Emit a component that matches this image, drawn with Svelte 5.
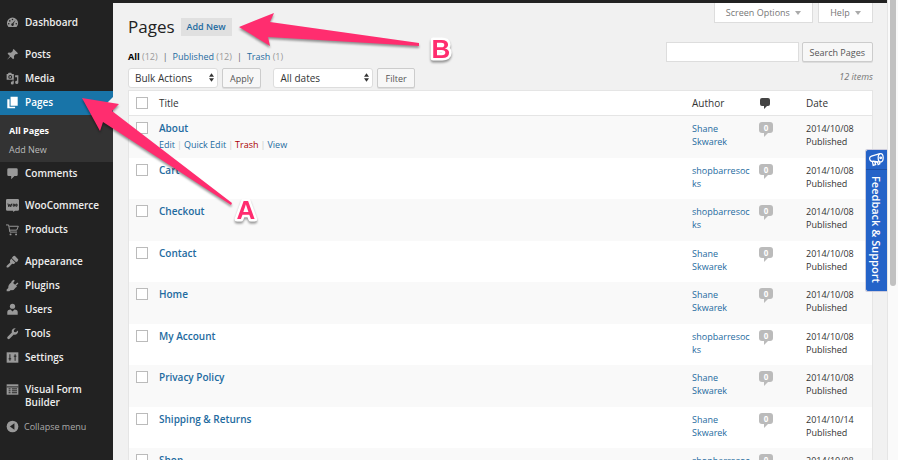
<script>
    let checked = false;
    let filterDate = 'All dates';
    let bulk = 'Bulk Actions';
    let query = '';

    const menu = [
        { name: 'Dashboard', icon: 'dashboard', gap: true },
        { name: 'Posts', icon: 'pin' },
        { name: 'Media', icon: 'media' },
        { name: 'Pages', icon: 'pages', active: true, sub: ['All Pages', 'Add New'] },
        { name: 'Comments', icon: 'comment', gap: true },
        { name: 'WooCommerce', icon: 'woo' },
        { name: 'Products', icon: 'cart', gap: true },
        { name: 'Appearance', icon: 'brush' },
        { name: 'Plugins', icon: 'plug' },
        { name: 'Users', icon: 'user' },
        { name: 'Tools', icon: 'wrench' },
        { name: 'Settings', icon: 'settings', gap: true },
        { name: 'Visual Form Builder', icon: 'form' },
    ];

    const pages = [
        { title: 'About', author: 'Shane Skwarek', date: '2014/10/08', open: true },
        { title: 'Cart', author: 'shopbarresocks', date: '2014/10/08' },
        { title: 'Checkout', author: 'shopbarresocks', date: '2014/10/08' },
        { title: 'Contact', author: 'Shane Skwarek', date: '2014/10/08' },
        { title: 'Home', author: 'Shane Skwarek', date: '2014/10/08' },
        { title: 'My Account', author: 'shopbarresocks', date: '2014/10/08' },
        { title: 'Privacy Policy', author: 'Shane Skwarek', date: '2014/10/08' },
        { title: 'Shipping & Returns', author: 'Shane Skwarek', date: '2014/10/14' },
        { title: 'Shop', author: 'shopbarresocks', date: '2014/10/08' },
    ];
</script>

<div class="shell">
    <div class="adminbar"></div>

    <nav class="menu">
        {#each menu as item}
            <a class="item" class:active={item.active} class:gap={item.gap} href="#{item.icon}">
                <svg class="icon" viewBox="0 0 20 20" aria-hidden="true">
                    {#if item.icon === 'dashboard'}
                        <path d="M3.8 17a8.6 8.6 0 1 1 12.4 0z" />
                        <g class="cut"><circle cx="10" cy="5.5" r="1.2" /><circle cx="5.8" cy="7.5" r="1.2" /><circle cx="4.2" cy="11.8" r="1.2" /><circle cx="15.8" cy="11.8" r="1.2" /><path d="M14.8 5.8 11.6 12a2 2 0 1 1-1.6-.8z" /></g>
                    {:else if item.icon === 'pin'}
                        <path d="m10.4 3 1.4-1.4 6.6 6.6L17 9.6l-2-.2-2.8 2.8.3 3.4-1.6 1.6-3.7-3.7L1.6 18l4.500-5.600-3.700-3.700L4 7.100l3.600.300L10.600 4.500z" />
                    {:else if item.icon === 'media'}
                        <path fill-rule="evenodd" d="M1 3h2l1-2h4l1 2h3v9H1zm5.500 1.500a3 3 0 1 0 0 6 3 3 0 0 0 0-6zm0 1.500a1.500 1.500 0 1 1 0 3 1.500 1.500 0 0 1 0-3z" />
                        <path d="M14 5h5v11a2.500 2.500 0 1 1-2-2.400V8h-3zm-4 8h2v4a2.300 2.300 0 1 1-2-2.200z" />
                    {:else if item.icon === 'pages'}
                        <path d="M7 1h11v14H7zM2 5h3.500v11.500H14V19H2z" />
                    {:else if item.icon === 'comment'}
                        <path d="M4 2h12q2 0 2 2v8q0 2-2 2h-3l-5 5v-5H4q-2 0-2-2V4q0-2 2-2z" />
                    {:else if item.icon === 'woo'}
                        <path d="M2 0h16q2 0 2 2v14q0 2-2 2h-4l-3 2v-2H2q-2 0-2-2V2q0-2 2-2z" />
                        <path class="line dark" d="m3 7 1.300 5L6 8l1.300 4L9 7m2 1v3h2V8zm4 0v3h2V8z" />
                    {:else if item.icon === 'cart'}
                        <path class="line" d="M0 3h4l2 11h11M5 5h14l-2.500 6H6" /><circle cx="7" cy="17.500" r="1.500" /><circle cx="15.500" cy="17.500" r="1.500" />
                    {:else if item.icon === 'brush'}
                        <path d="m11 2 2.500-1L19 7l-1 2.500-2.500 1.500L9 4.500zM8 5.500l6.500 6.500-2.500 2-2.500-.500-5 5Q2 20 1 19q-1-1 .500-3l5-4.500L6 9z" />
                    {:else if item.icon === 'plug'}
                        <path d="m12 1 1.500 1.500L11 6l3 3 3.500-3.500L19 7l-3.500 3.500L17 12l-2 1q-3 5-7.500 4L5 19H1v-3l2.500-2Q3 9 8 5.500L9 3z" />
                    {:else if item.icon === 'user'}
                        <circle cx="10" cy="5" r="4" /><path d="M2 18v-4q0-4 5-4l3 3 3-3q5 0 5 4v4z" />
                    {:else if item.icon === 'wrench'}
                        <path d="M18.500 5.500a5 5 0 0 1-6.500 6L5.500 18q-1.500 1.500-3 0t0-3L9 8.500a5 5 0 0 1 6-6.500l-3 3 .500 2.500 2.500.500z" />
                    {:else if item.icon === 'settings'}
                        <path d="M1 2h18v16H1z" /><path class="line dark" d="M6 5v10M4 12h4m6-7v10m-2-7h4" />
                    {:else if item.icon === 'form'}
                        <path d="M1 2h18v16H1z" /><path class="line dark" d="M1 6h18M4 9h3m2 0h8M4 12h3m2 0h8M4 15h3m2 0h8" />
                    {/if}
                </svg>
                <span>{item.name}</span>
            </a>
            {#if item.sub}
                <div class="submenu">
                    {#each item.sub as sub, i}
                        <a class:current={i === 0} href="#sub{i}">{sub}</a>
                    {/each}
                </div>
            {/if}
        {/each}
        <button class="collapse">
            <svg class="icon" viewBox="0 0 20 20" aria-hidden="true"><circle cx="10" cy="10" r="9" /><path class="cut" d="M13 5v10l-7-5z" /></svg>
            <span>Collapse menu</span>
        </button>
    </nav>

    <main>
        <header>
            <h1>Pages</h1>
            <a class="add" href="#new">Add New</a>
            <div class="tabs">
                <button>Screen Options <i></i></button>
                <button>Help <i></i></button>
            </div>
        </header>

        <div class="controls">
            <div class="left">
                <div class="views">
                    <a class="current" href="#all"><b>All</b> <span>(12)</span></a><em>|</em>
                    <a href="#published">Published <span>(12)</span></a><em>|</em>
                    <a href="#trash">Trash <span>(1)</span></a>
                </div>
                <div class="filters">
                    <div class="select bulk">
                        <select aria-label="Bulk actions" bind:value={bulk}>
                            <option>Bulk Actions</option>
                            <option>Edit</option>
                        </select>
                        <svg viewBox="0 0 6 10" aria-hidden="true"><path d="M3 0l3 4H0zM0 6h6l-3 4z" /></svg>
                    </div>
                    <button class="btn">Apply</button>
                    <div class="select dates">
                        <select aria-label="Filter by date" bind:value={filterDate}>
                            <option>All dates</option>
                            <option>October 2014</option>
                        </select>
                        <svg viewBox="0 0 6 10" aria-hidden="true"><path d="M3 0l3 4H0zM0 6h6l-3 4z" /></svg>
                    </div>
                    <button class="btn">Filter</button>
                </div>
            </div>
            <div class="right">
                <div class="search">
                    <input type="text" aria-label="Search Pages" bind:value={query} />
                    <button class="btn">Search Pages</button>
                </div>
                <p>12 items</p>
            </div>
        </div>

        <table>
            <thead>
                <tr>
                    <th class="check"><input type="checkbox" aria-label="Select all" bind:checked /></th>
                    <th>Title</th>
                    <th class="author">Author</th>
                    <th class="count"><svg viewBox="0 0 10 11" aria-label="Comments"><path d="M2 0h6q2 0 2 2v4q0 2-2 2H7l-3 3V8H2Q0 8 0 6V2q0-2 2-2z" /></svg></th>
                    <th class="date">Date</th>
                </tr>
            </thead>
            <tbody>
                {#each pages as page}
                    <tr>
                        <td class="check"><input type="checkbox" aria-label="Select {page.title}" {checked} /></td>
                        <td>
                            <a class="title" href="#edit">{page.title}</a>
                            {#if page.open}
                                <div class="actions">
                                    <a href="#edit">Edit</a><i>|</i><a href="#quick">Quick Edit</a><i>|</i><a class="trash" href="#trash">Trash</a><i>|</i><a href="#view">View</a>
                                </div>
                            {/if}
                        </td>
                        <td class="author"><a href="#author">{page.author}</a></td>
                        <td class="count"><a class="bubble" href="#comments">0</a></td>
                        <td class="date">{page.date}<br />Published</td>
                    </tr>
                {/each}
            </tbody>
        </table>
    </main>

    <div class="scrollbar"><div></div></div>

    <a class="feedback" href="#feedback">
        <svg viewBox="0 0 18 18" aria-hidden="true"><path d="M13 2 3 5Q0 6 1 9t4 2l9 1M4 11l1 5 3-1-1-3 3 0 1 3 2-1-1-2" /><ellipse cx="14" cy="7" rx="3" ry="5" /><circle cx="14" cy="7" r="1" /></svg>
        <span>Feedback &amp; Support</span>
    </a>

    <svg class="notes" width="460" height="240" viewBox="0 0 460 240">
        <path d="M82 98l37 6-7 7 120 92-1 2L103 122l-3 9z" />
        <path d="M239 27l35-14-4 9 149 21v3l-151-9 2 9z" />
        <text x="246" y="219">A</text>
        <text x="441" y="58">B</text>
    </svg>
</div>

<style>
    :global(body) {
        margin: 0;
        background: #f1f1f1;
    }
    .shell {
        --link: #1e6ba0;
        position: relative;
        display: grid;
        grid-template: 3px 1fr / 113px 1fr 11px;
        height: 100vh;
        overflow: hidden;
        background: #f1f1f1;
        color: #333;
        font: 10px/13px "Open Sans", sans-serif;
    }
    a {
        color: var(--link);
        text-decoration: none;
    }
    button, select, input {
        font: inherit;
        color: inherit;
        margin: 0;
        box-sizing: border-box;
    }
    button {
        font-size: 9px;
    }
    .adminbar {
        grid-column: 1 / 3;
        background: #222;
    }

    .menu {
        grid-area: 2 / 1;
        display: flex;
        flex-direction: column;
        padding-top: 8px;
        background: #222;
    }
    .item {
        box-sizing: border-box;
        display: flex;
        align-items: flex-start;
        gap: 6px;
        min-height: 24px;
        padding: 5px 16px 5px 6px;
        color: #eee;
        font-weight: 600;
    }
    .item.gap {
        margin-bottom: 8px;
    }
    .item.active {
        position: relative;
        background: #1874a8;
        color: #fff;
    }
    .item.active::after {
        content: "";
        position: absolute;
        right: 0;
        top: 6px;
        border: 6px solid transparent;
        border-right-color: #f1f1f1;
        border-left: 0;
    }
    .icon {
        width: 13px;
        height: 13px;
        flex: none;
        fill: #999;
    }
    .active .icon {
        fill: #fff;
    }
    .cut {
        fill: #222;
    }
    .line {
        fill: none;
        stroke: #999;
        stroke-width: 1.5;
    }
    .dark {
        stroke: #222;
    }
    .submenu {
        display: flex;
        flex-direction: column;
        padding: 6px 9px 3px;
        background: #333;
        font-size: 9px;
    }
    .submenu a {
        color: #bbb;
        line-height: 19px;
    }
    .submenu .current {
        color: #fff;
        font-weight: 700;
    }
    .collapse {
        display: flex;
        align-items: center;
        gap: 5px;
        height: 24px;
        padding: 0 6px;
        border: 0;
        background: none;
        color: #aaa;
    }

    main {
        grid-area: 2 / 2;
        min-width: 0;
        padding: 0 14px 0 15px;
    }
    header {
        display: flex;
        align-items: center;
        height: 47px;
        gap: 6px;
    }
    h1 {
        margin: 0;
        color: #222;
        font-size: 17px;
        font-weight: 400;
        line-height: 24px;
    }
    .add {
        padding: 2px 6px;
        background: #e0e0e0;
        font-size: 9px;
        font-weight: 600;
        line-height: 14px;
    }
    .tabs {
        display: flex;
        align-self: flex-start;
        gap: 5px;
        margin-left: auto;
    }
    .tabs button {
        height: 20px;
        padding: 0 11px;
        border: 1px solid #ddd;
        border-top: 0;
        background: #fff;
        color: #777;
    }
    .tabs i {
        display: inline-block;
        margin: 0 0 1px 3px;
        border: 3px solid transparent;
        border-top: 4px solid #aaa;
        border-bottom: 0;
    }
    .controls {
        display: flex;
        justify-content: space-between;
        height: 40px;
    }
    .views {
        display: flex;
        gap: 5px;
        font-size: 9px;
        line-height: 14px;
    }
    .views span {
        color: #999;
    }
    .views em {
        color: #666;
        font-style: normal;
    }
    .views .current {
        color: #000;
    }
    .filters {
        display: flex;
        gap: 4px;
        margin-top: 4px;
    }
    .select {
        position: relative;
    }
    .select svg {
        position: absolute;
        right: 4px;
        top: 5px;
        width: 5px;
        height: 9px;
        fill: #333;
        pointer-events: none;
    }
    select {
        appearance: none;
        width: 100%;
        height: 20px;
        padding: 0 6px;
        border: 1px solid #ddd;
        border-radius: 3px;
        background: #fff;
    }
    .bulk {
        width: 90px;
    }
    .dates {
        width: 100px;
        margin-left: 8px;
    }
    .btn {
        height: 20px;
        padding: 0 7px;
        border: 1px solid #ccc;
        border-radius: 2px;
        background: #f7f7f7;
        box-shadow: 0 1px 0 #ddd;
        color: #555;
    }
    .right {
        margin-top: -8px;
    }
    .search {
        display: flex;
        gap: 3px;
    }
    .search input {
        width: 133px;
        height: 20px;
        border: 1px solid #ddd;
        background: #fff;
    }
    .right p {
        margin: 8px 0 0;
        color: #777;
        font-size: 9px;
        font-style: italic;
        text-align: right;
    }

    table {
        width: 100%;
        border: 1px solid #e5e5e5;
        border-spacing: 0;
        table-layout: fixed;
        background: #fff;
    }
    th {
        height: 24px;
        padding: 0;
        border-bottom: 1px solid #e5e5e5;
        font-weight: 400;
        text-align: left;
    }
    td {
        box-sizing: border-box;
        height: 41px;
        padding: 6px 0 0;
        vertical-align: top;
        font-size: 9px;
    }
    tbody tr:nth-child(odd) td {
        height: 42px;
    }
    tbody tr:nth-child(odd) {
        background: #f9f9f9;
    }
    .check {
        width: 30px;
        text-align: center;
    }
    .check input {
        appearance: none;
        display: block;
        width: 12px;
        height: 12px;
        margin-left: 7px;
        border: 1px solid #bbb;
        background: #fff;
    }
    .author {
        width: 67px;
    }
    td.author {
        padding-right: 7px;
        overflow-wrap: anywhere;
    }
    .count {
        width: 47px;
    }
    .count svg {
        display: block;
        width: 10px;
        height: 11px;
        margin-left: 1px;
        fill: #444;
    }
    .date {
        width: 66px;
    }
    .title {
        font-size: 10px;
        font-weight: 600;
    }
    .actions {
        margin-top: 3px;
    }
    .actions i {
        margin: 0 2px;
        color: #ccc;
        font-style: normal;
    }
    .trash {
        color: #a00;
    }
    .bubble {
        position: relative;
        display: block;
        width: 14px;
        height: 11px;
        border-radius: 3px;
        background: #bbb;
        color: #fff;
        font-size: 8px;
        font-weight: 700;
        line-height: 11px;
        text-align: center;
    }
    .bubble::after {
        content: "";
        position: absolute;
        left: 5px;
        top: 11px;
        border-top: 4px solid #bbb;
        border-right: 4px solid transparent;
    }

    .scrollbar {
        grid-area: 1 / 3 / 3 / 4;
        border-left: 1px solid #e5e5e5;
        background: #fafafa;
    }
    .scrollbar div {
        width: 6px;
        height: 286px;
        margin-left: 2px;
        border-radius: 0 0 3px 3px;
        background: #c1c1c1;
    }
    .feedback {
        position: absolute;
        right: 11px;
        top: 149px;
        box-sizing: border-box;
        display: flex;
        flex-direction: column;
        align-items: center;
        width: 22px;
        height: 143px;
        border: 1px solid #ccd;
        border-right: 0;
        border-radius: 3px 0 0 3px;
        background: #2463c8;
        color: #fff;
        font-size: 11px;
        font-weight: 600;
    }
    .feedback svg {
        width: 15px;
        height: 15px;
        padding: 2px 3px;
        border-bottom: 1px solid #1a4fa8;
        fill: none;
        stroke: #fff;
        stroke-width: 1.5;
    }
    .feedback span {
        margin-top: 6px;
        writing-mode: vertical-rl;
        white-space: nowrap;
    }

    .notes {
        position: absolute;
        left: 0;
        top: 0;
        pointer-events: none;
        fill: #ff2d6f;
        filter: drop-shadow(0 2px 1px rgba(0, 0, 0, 0.4));
    }
    .notes text {
        font: bold 26px "Liberation Sans", sans-serif;
        text-anchor: middle;
        stroke: #fff;
        stroke-width: 5px;
        stroke-linejoin: round;
        paint-order: stroke;
    }
</style>
